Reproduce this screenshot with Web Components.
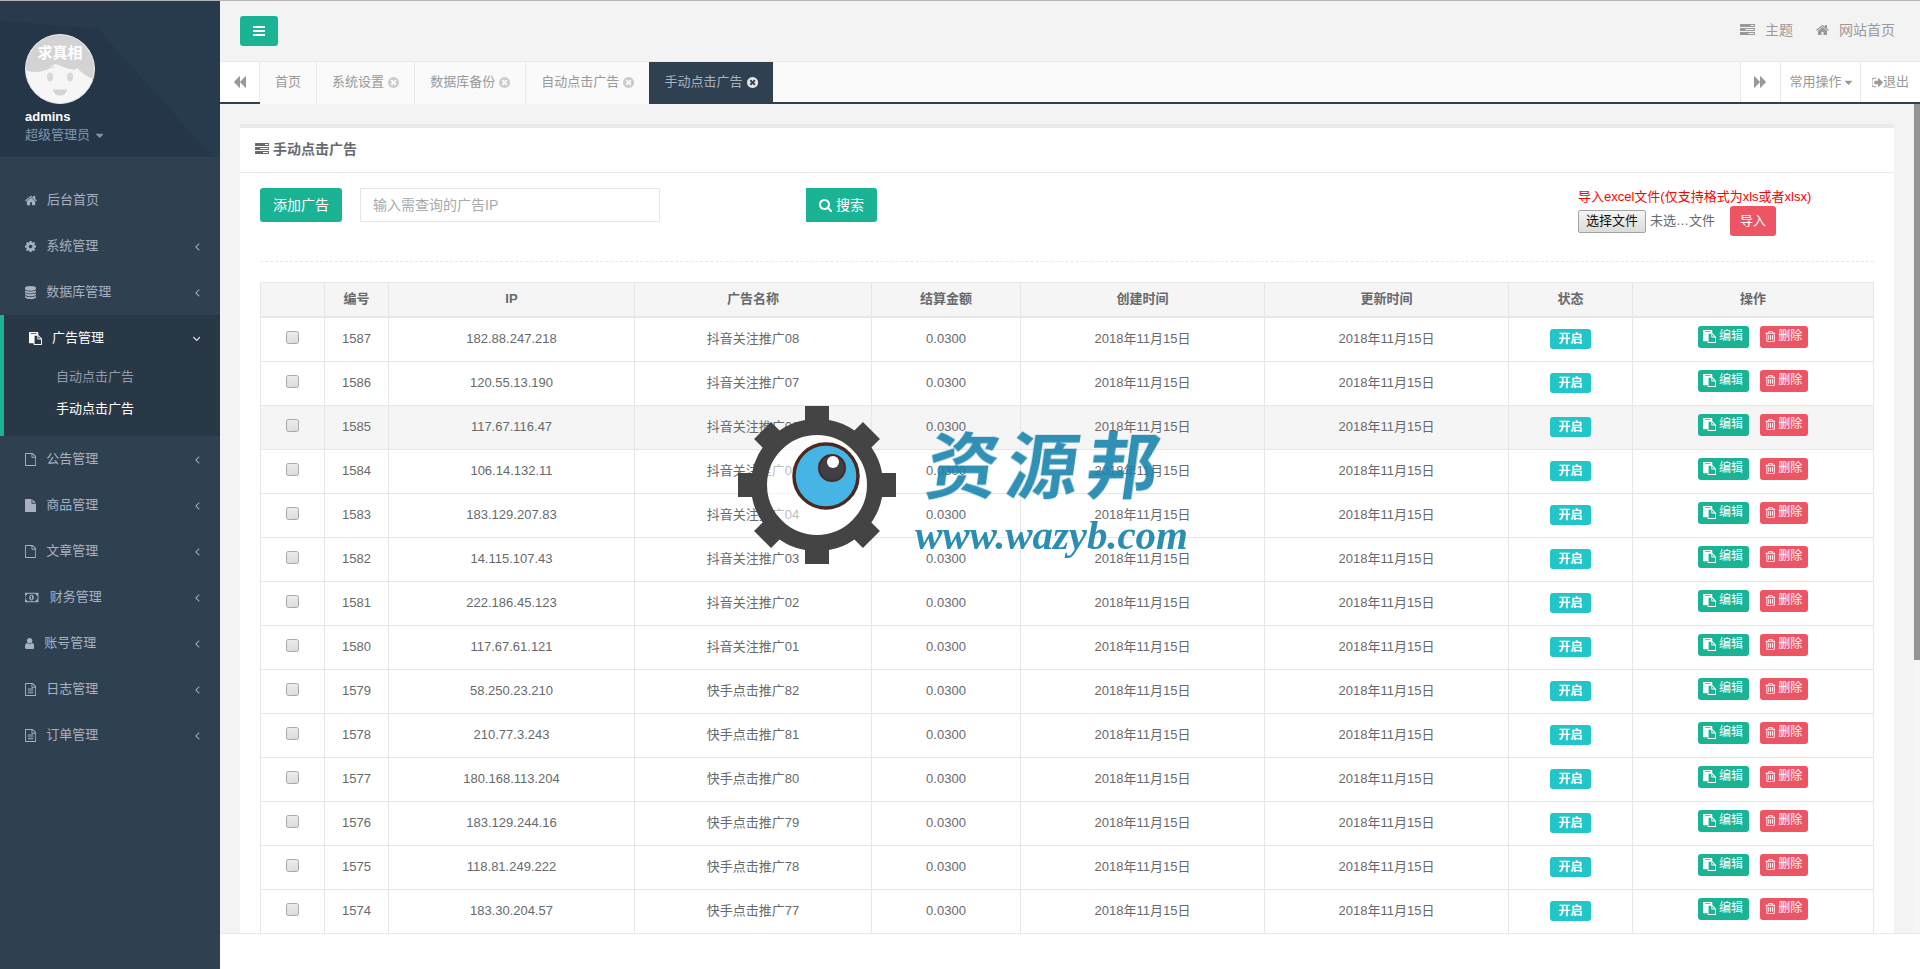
<!DOCTYPE html>
<html lang="zh-CN">
<head>
<meta charset="utf-8">
<title>手动点击广告</title>
<style>
html,body{margin:0;height:100%;overflow:hidden;background:#fff;font:13px/1.43 "Liberation Sans","Noto Sans CJK SC",sans-serif;color:#676a6c}
</style>
</head>
<body>
<x-app>
  <x-sidebar slot="side">
    <x-nav-item icon="home" label="后台首页" plain></x-nav-item>
    <x-nav-item icon="cog" label="系统管理"></x-nav-item>
    <x-nav-item icon="database" label="数据库管理"></x-nav-item>
    <x-nav-item icon="paste" label="广告管理" active>
      <x-sub-item label="自动点击广告"></x-sub-item>
      <x-sub-item label="手动点击广告" current></x-sub-item>
    </x-nav-item>
    <x-nav-item icon="file-o" label="公告管理"></x-nav-item>
    <x-nav-item icon="file" label="商品管理"></x-nav-item>
    <x-nav-item icon="file-o" label="文章管理"></x-nav-item>
    <x-nav-item icon="money" label="财务管理"></x-nav-item>
    <x-nav-item icon="user" label="账号管理"></x-nav-item>
    <x-nav-item icon="file-text-o" label="日志管理"></x-nav-item>
    <x-nav-item icon="file-text-o" label="订单管理"></x-nav-item>
  </x-sidebar>
  <x-topbar slot="top"></x-topbar>
  <x-tabbar slot="tabs">
    <x-tab label="首页" plain></x-tab>
    <x-tab label="系统设置"></x-tab>
    <x-tab label="数据库备份"></x-tab>
    <x-tab label="自动点击广告"></x-tab>
    <x-tab label="手动点击广告" active></x-tab>
  </x-tabbar>
  <x-panel slot="main" title="手动点击广告">
    <x-toolbar></x-toolbar>
    <x-ad-table></x-ad-table>
  </x-panel>
  <x-watermark slot="over"></x-watermark>
</x-app>

<script>
const ICONS = {
  bars:[128,1536,"M1664 1344v128q0 26-19 45t-45 19h-1408q-26 0-45-19t-19-45v-128q0-26 19-45t45-19h1408q26 0 45 19t19 45zm0-512v128q0 26-19 45t-45 19h-1408q-26 0-45-19t-19-45v-128q0-26 19-45t45-19h1408q26 0 45 19t19 45zm0-512v128q0 26-19 45t-45 19h-1408q-26 0-45-19t-19-45v-128q0-26 19-45t45-19h1408q26 0 45 19t19 45z"],
  search:[64,1664,"M1216 832q0-185-131.500-316.500t-316.500-131.500-316.500 131.500-131.500 316.500 131.500 316.500 316.500 131.500 316.500-131.500 131.500-316.500zm512 832q0 52-38 90t-90 38q-54 0-90-38l-343-342q-179 124-399 124-143 0-273.500-55.500t-225-150-150-225-55.500-273.500 55.500-273.500 150-225 225-150 273.500-55.500 273.500 55.500 225 150 150 225 55.500 273.500q0 220-124 399l343 343q37 37 37 90z"],
  home:[64,1664,"M1472 992v480q0 26-19 45t-45 19h-384v-384h-256v384h-384q-26 0-45-19t-19-45v-480q0-1 .5-3t.5-3l575-474 575 474q1 2 1 6zm223-69l-62 74q-8 9-21 11h-3q-13 0-21-7l-692-577-692 577q-12 8-24 7-13-2-21-11l-62-74q-8-10-7-23.500t11-21.500l719-599q32-26 76-26t76 26l244 204v-195q0-14 9-23t23-9h192q14 0 23 9t9 23v408l219 182q10 8 11 21.500t-7 23.500z"],
  user:[256,1280,"M1536 1399q0 109-62.500 187t-150.500 78h-854q-88 0-150.500-78t-62.500-187q0-85 8.500-160.500t31.500-152 58.500-131 94-89 134.500-34.500q131 128 313 128t313-128q76 0 134.500 34.500t94 89 58.500 131 31.500 152 8.500 160.500zm-256-887q0 159-112.500 271.500t-271.500 112.500-271.500-112.500-112.500-271.500 112.500-271.500 271.500-112.500 271.500 112.500 112.500 271.500z"],
  database:[128,1536,"M896 768q237 0 443-43t325-127v170q0 69-103 128t-280 93.500-385 34.500-385-34.500-280-93.500-103-128v-170q119 84 325 127t443 43zm0 768q237 0 443-43t325-127v170q0 69-103 128t-280 93.500-385 34.500-385-34.500-280-93.500-103-128v-170q119 84 325 127t443 43zm0-384q237 0 443-43t325-127v170q0 69-103 128t-280 93.500-385 34.500-385-34.500-280-93.500-103-128v-170q119 84 325 127t443 43zm0-1152q208 0 385 34.500t280 93.500 103 128v128q0 69-103 128t-280 93.500-385 34.500-385-34.500-280-93.500-103-128v-128q0-69 103-128t280-93.500 385-34.500z"],
  cog:[128,1536,"M1152 896q0-106-75-181t-181-75-181 75-75 181 75 181 181 75 181-75 75-181zm512-109v222q0 12-8 23t-20 13l-185 28q-19 54-39 91 35 50 107 138 10 12 10 25t-9 23q-27 37-99 108t-94 71q-12 0-26-9l-138-108q-44 23-91 38-16 136-29 186-7 28-36 28h-222q-14 0-24.500-8.500t-11.500-21.500l-28-184q-49-16-90-37l-141 107q-10 9-25 9-14 0-25-11-126-114-165-168-7-10-7-23 0-12 8-23 15-21 51-66.500t54-70.500q-27-50-41-99l-183-27q-13-2-21-12.500t-8-23.500v-222q0-12 8-23t19-13l186-28q14-46 39-92-40-57-107-138-10-12-10-24 0-10 9-23 26-36 98.500-107.500t94.500-71.500q13 0 26 10l138 107q44-23 91-38 16-136 29-186 7-28 36-28h222q14 0 24.500 8.500t11.500 21.500l28 184q49 16 90 37l142-107q9-9 24-9 13 0 25 10 129 119 165 170 7 8 7 22 0 12-8 23-15 21-51 66.500t-54 70.500q26 50 41 98l183 28q13 2 21 12.500t8 23.500z"],
  "angle-left":[576,640,"M1203 544q0 13-10 23l-393 393 393 393q10 10 10 23t-10 23l-50 50q-10 10-23 10t-23-10l-466-466q-10-10-10-23t10-23l466-466q10-10 23-10t23 10l50 50q10 10 10 23z"],
  "angle-down":[384,1024,"M1395 736q0 13-10 23l-466 466q-10 10-23 10t-23-10l-466-466q-10-10-10-23t10-23l50-50q10-10 23-10t23 10l393 393 393-393q10-10 23-10t23 10l50 50q10 10 10 23z"],
  "caret-down":[384,1024,"M1408 704q0 26-19 45l-448 448q-19 19-45 19t-45-19l-448-448q-19-19-19-45t19-45 45-19h896q26 0 45 19t19 45z"],
  "file-o":[128,1536,"M1596 380q28 28 48 76t20 88v1152q0 40-28 68t-68 28h-1344q-40 0-68-28t-28-68v-1600q0-40 28-68t68-28h896q40 0 88 20t76 48zm-444-244v376h376q-10-29-22-41l-313-313q-12-12-41-22zm384 1528v-1024h-416q-40 0-68-28t-28-68v-416h-768v1536h1280z"],
  file:[128,1536,"M1152 512v-472q22 14 36 28l408 408q14 14 28 36h-472zm-128 32q0 40 28 68t68 28h544v1056q0 40-28 68t-68 28h-1344q-40 0-68-28t-28-68v-1600q0-40 28-68t68-28h800v544z"],
  "file-text-o":[128,1536,"M1596 380q28 28 48 76t20 88v1152q0 40-28 68t-68 28h-1344q-40 0-68-28t-28-68v-1600q0-40 28-68t68-28h896q40 0 88 20t76 48zm-444-244v376h376q-10-29-22-41l-313-313q-12-12-41-22zm384 1528v-1024h-416q-40 0-68-28t-28-68v-416h-768v1536h1280zm-1024-864q0-14 9-23t23-9h704q14 0 23 9t9 23v64q0 14-9 23t-23 9h-704q-14 0-23-9t-9-23v-64zm736 224q14 0 23 9t9 23v64q0 14-9 23t-23 9h-704q-14 0-23-9t-9-23v-64q0-14 9-23t23-9h704zm0 256q14 0 23 9t9 23v64q0 14-9 23t-23 9h-704q-14 0-23-9t-9-23v-64q0-14 9-23t23-9h704z"],
  paste:[0,1792,"M768 1664h896v-640h-416q-40 0-68-28t-28-68v-416h-384v1152zm256-1440v-64q0-13-9.500-22.500t-22.500-9.500h-704q-13 0-22.500 9.500t-9.500 22.500v64q0 13 9.500 22.500t22.500 9.500h704q13 0 22.500-9.500t9.500-22.500zm256 672h299l-299-299v299zm512 128v672q0 40-28 68t-68 28h-960q-40 0-68-28t-28-68v-160h-544q-40 0-68-28t-28-68v-1344q0-40 28-68t68-28h1088q40 0 68 28t28 68v328q21 13 36 28l408 408q28 28 48 76t20 88z"],
  "trash-o":[128,1408,"M704 736v576q0 14-9 23t-23 9h-64q-14 0-23-9t-9-23v-576q0-14 9-23t23-9h64q14 0 23 9t9 23zm256 0v576q0 14-9 23t-23 9h-64q-14 0-23-9t-9-23v-576q0-14 9-23t23-9h64q14 0 23 9t9 23zm256 0v576q0 14-9 23t-23 9h-64q-14 0-23-9t-9-23v-576q0-14 9-23t23-9h64q14 0 23 9t9 23zm128 724v-948h-896v948q0 22 7 40.500t14.500 27 10.500 8.500h832q3 0 10.500-8.500t14.500-27 7-40.500zm-672-1076h448l-48-117q-7-9-17-11h-317q-10 2-17 11zm928 32v64q0 14-9 23t-23 9h-96v948q0 83-47 143.500t-113 60.500h-832q-66 0-113-58.500t-47-141.500v-952h-96q-14 0-23-9t-9-23v-64q0-14 9-23t23-9h309l70-167q15-37 54-63t79-26h320q40 0 79 26t54 63l70 167h309q14 0 23 9t9 23z"],
  tasks:[0,1792,"M1024 1408h640v-128h-640v128zm-384-512h1024v-128h-1024v128zm640-512h384v-128h-384v128zm512 832v256q0 26-19 45t-45 19h-1664q-26 0-45-19t-19-45v-256q0-26 19-45t45-19h1664q26 0 45 19t19 45zm0-512v256q0 26-19 45t-45 19h-1664q-26 0-45-19t-19-45v-256q0-26 19-45t45-19h1664q26 0 45 19t19 45zm0-512v256q0 26-19 45t-45 19h-1664q-26 0-45-19t-19-45v-256q0-26 19-45t45-19h1664q26 0 45 19t19 45z"],
  backward:[64,1664,"M1683 141q19-19 32-13t13 32v1472q0 26-13 32t-32-13l-710-710q-9-9-13-19v710q0 26-13 32t-32-13l-710-710q-19-19-19-45t19-45l710-710q19-19 32-13t13 32v710q4-10 13-19z"],
  forward:[64,1664,"M109 1651q-19 19-32 13t-13-32v-1472q0-26 13-32t32 13l710 710q9 9 13 19v-710q0-26 13-32t32 13l710 710q19 19 19 45t-19 45l-710 710q-19 19-32 13t-13-32v-710q-4 10-13 19z"],
  "times-circle":[128,1536,"M1277 1122q0-26-19-45l-181-181 181-181q19-19 19-45 0-27-19-46l-90-90q-19-19-46-19-26 0-45 19l-181 181-181-181q-19-19-45-19-27 0-46 19l-90 90q-19 19-19 46 0 26 19 45l181 181-181 181q-19 19-19 45 0 27 19 46l90 90q19 19 46 19 26 0 45-19l181-181 181 181q19 19 45 19 27 0 46-19l90-90q19-19 19-46zm387-226q0 209-103 385.500t-279.500 279.500-385.500 103-385.500-103-279.500-279.500-103-385.500 103-385.500 279.500-279.500 385.500-103 385.500 103 279.500 279.500 103 385.500z"],
  "sign-out":[128,1536,"M704 1440q0 4 1 20t.5 26.500-3 23.500-10 19.500-20.500 6.500h-320q-119 0-203.500-84.500t-84.500-203.500v-704q0-119 84.500-203.500t203.500-84.500h320q13 0 22.500 9.500t9.500 22.500q0 4 1 20t.5 26.500-3 23.500-10 19.500-20.500 6.500h-320q-66 0-113 47t-47 113v704q0 66 47 113t113 47h312l11.500 1 11.500 3 8 5.500 7 9 2 13.500zm928-544q0 26-19 45l-544 544q-19 19-45 19t-45-19-19-45v-288h-448q-26 0-45-19t-19-45v-384q0-26 19-45t45-19h448v-288q0-26 19-45t45-19 45 19l544 544q19 19 19 45z"],
  money:[0,2048,"M704 1152h384v-96h-128v-448h-114l-148 137 77 80q42-37 55-57h2v288h-128v96zm512-256q0 70-21 142t-59.500 134-101.500 101-138 39-138-39-101.500-101-59.500-134-21-142 21-142 59.500-134 101.500-101 138-39 138 39 101.500 101 59.500 134 21 142zm512 256v-512q-106 0-181-75t-75-181h-1152q0 106-75 181t-181 75v512q106 0 181 75t75 181h1152q0-106 75-181t181-75zm128-832v1152q0 26-19 45t-45 19h-1792q-26 0-45-19t-19-45v-1152q0-26 19-45t45-19h1792q26 0 45 19t19 45z"]
};

function base(cls, html){
  return class extends HTMLElement{
    constructor(){super();this.attachShadow({mode:"open"}).innerHTML=html;}
  };
}

class XIcon extends HTMLElement{
  connectedCallback(){
    const [x,w,d]=ICONS[this.getAttribute("name")];
    const s=this.shadowRoot||this.attachShadow({mode:"open"});
    s.innerHTML=`<style>:host{display:inline-block;line-height:1;height:1em;width:${w/1792}em;flex:none}
      svg{display:block;width:100%;height:100%;fill:currentColor}</style>
      <svg viewBox="${x} 0 ${w} 1792" preserveAspectRatio="none"><path d="${d}"/></svg>`;
  }
}
customElements.define("x-icon",XIcon);

customElements.define("x-app",base("app",`<style>
:host{display:grid;grid-template-columns:220px 1fr;grid-template-rows:61px 42px 1fr 36px;height:969px;box-sizing:border-box;border-top:1px solid #b4b4b4;position:relative;overflow:hidden}
.side{grid-row:1/5;display:block;min-height:0}
.foot{grid-column:2;grid-row:4;background:#fff;border-top:1px solid #e7eaec}
.main{display:block;min-height:0;min-width:0}
</style>
<slot name="side" class="side"></slot>
<slot name="top"></slot>
<slot name="tabs"></slot>
<slot name="main"></slot>
<div class="foot"></div>
<slot name="over"></slot>`));

customElements.define("x-sidebar",base("side",`<style>
:host{display:block;height:100%;background:#2f4050;grid-row:1/5;color:#a7b1c2;font-size:13px}
.head{position:relative;height:156px;background:#243648;overflow:hidden;box-sizing:border-box;padding:33px 0 0 25px}
.bg{position:absolute;left:0;top:0}
.av,.name,.role{position:relative}
.av{display:block;width:70px;height:70px}
.name{color:#fff;font-weight:700;font-size:13px;line-height:18px;margin-top:4px}
.role{color:#8095a8;font-size:13px;line-height:18px;display:flex;align-items:center;gap:6px}
.role x-icon{font-size:13px}
nav{display:block;padding-top:20px}
</style>
<div class="head">
<svg class="bg" width="220" height="156" viewBox="0 0 220 156">
<polygon points="0,0 220,0 220,156 0,156" fill="#243648"/>
<polygon points="0,0 120,0 98,28 0,20" fill="#283a4c"/>
<polygon points="120,0 220,0 220,156 213,156 98,28" fill="#283b4c"/>
</svg>
<svg class="av" viewBox="0 0 70 70">
<defs><clipPath id="c"><circle cx="35" cy="35" r="34"/></clipPath></defs>
<circle cx="35" cy="35" r="34.5" fill="#f6f6f6" stroke="#e8e8e8"/>
<g clip-path="url(#c)">
<path d="M0 0H70V46C61 42 55 38 53 34C47 38 40 33 30 30C25 33 18 41 3 37L0 36Z" fill="#d3d3d3"/>
<ellipse cx="25" cy="43" rx="3" ry="4.5" fill="#d8d8d8"/><ellipse cx="45" cy="43" rx="3" ry="4.5" fill="#d8d8d8"/>
<path d="M28 55.500h14q-1 6-7 6t-7-6z" fill="#d3d3d3"/>
<path d="M21 36q4-3 9-3" fill="none" stroke="#d8d8d8"/>
<text x="35" y="24" text-anchor="middle" font-size="15" font-weight="700" fill="#fff" font-family="'Noto Sans CJK SC',sans-serif">求真相</text>
</g></svg>
<div class="name">admins</div>
<div class="role">超级管理员 <x-icon name="caret-down"></x-icon></div>
</div>
<nav><slot></slot></nav>`));

class XNavItem extends HTMLElement{
  connectedCallback(){
    if(this.shadowRoot) return;
    const active=this.hasAttribute("active"), plain=this.hasAttribute("plain");
    const arrow=plain?"":`<x-icon class="ar" name="${active?"angle-down":"angle-left"}"></x-icon>`;
    this.attachShadow({mode:"open"}).innerHTML=`<style>
:host{display:block;color:#a7b1c2;font-size:13px}
:host([active]){background:#293846;border-left:4px solid #1ab394;color:#fff}
.row{display:flex;align-items:center;height:46px;box-sizing:border-box;padding-left:25px;gap:10px;position:relative}
.ar{margin-left:auto;margin-right:20px;font-size:13px}
.sub{display:block;padding-bottom:11px}
</style>
<div class="row"><x-icon name="${this.getAttribute("icon")}"></x-icon><span>${this.getAttribute("label")}</span>${arrow}</div>
${active?'<div class="sub"><slot></slot></div>':''}`;
  }
}
customElements.define("x-nav-item",XNavItem);

class XSubItem extends HTMLElement{
  connectedCallback(){
    if(this.shadowRoot) return;
    this.attachShadow({mode:"open"}).innerHTML=`<style>
:host{display:block;height:32px;line-height:32px;padding-left:52px;color:#8f9bac;font-size:13px}
:host([current]){color:#fff}</style>${this.getAttribute("label")}`;
  }
}
customElements.define("x-sub-item",XSubItem);

customElements.define("x-topbar",base("top",`<style>
:host{display:flex;align-items:center;background:#f3f3f4;border-bottom:1px solid #e7eaec;box-sizing:border-box;height:61px;padding:0 25px 0 20px;color:#999;font-size:14px}
.btn{width:38px;height:30px;background:#1ab394;border-radius:3px;color:#fff;display:flex;align-items:center;justify-content:center;font-size:14px;margin-top:-1px}
.r{margin-left:auto;display:flex;align-items:center;margin-top:-1px}
.r span{display:flex;align-items:center}
.t{gap:10px;margin-right:23px}.h{gap:10px}
.t x-icon{font-size:14px;width:15px}
</style>
<div class="btn"><x-icon name="bars"></x-icon></div>
<div class="r"><span class="t"><x-icon name="tasks"></x-icon>主题</span><span class="h"><x-icon name="home"></x-icon>网站首页</span></div>`));

customElements.define("x-tabbar",base("tabs",`<style>
:host{display:flex;height:42px;box-sizing:border-box;background:#fafafa;border-bottom:2px solid #2f4050;color:#999;font-size:13px}
.btn{display:flex;align-items:center;justify-content:center;background:#fff;box-sizing:border-box;border-right:1px solid #e7eaec}
.l{width:40px}
.tabs{display:flex;flex:1}
.rb{margin-left:auto;display:flex}
.rb .btn{border-right:0;border-left:1px solid #e7eaec}
.f{width:40px}.o{width:80px;gap:3px}.q{width:60px}
x-icon{font-size:13px}
.f x-icon,.l x-icon{font-size:14px}
.c{width:7px;font-size:13px}
</style>
<div class="btn l"><x-icon name="backward"></x-icon></div>
<div class="tabs"><slot></slot></div>
<div class="rb">
<div class="btn f"><x-icon name="forward"></x-icon></div>
<div class="btn o">常用操作<x-icon name="caret-down" class="c"></x-icon></div>
<div class="btn q"><x-icon name="sign-out"></x-icon>退出</div>
</div>`));

class XTab extends HTMLElement{
  connectedCallback(){
    if(this.shadowRoot) return;
    const close=this.hasAttribute("plain")?"":'<x-icon name="times-circle"></x-icon>';
    this.attachShadow({mode:"open"}).innerHTML=`<style>
:host{display:flex;align-items:center;gap:4px;box-sizing:border-box;padding:0 15px;border-right:1px solid #e7eaec;height:42px;color:#999;font-size:13px;background:#fafafa;flex:none}
x-icon{font-size:13px;color:#ccc;margin-top:-2px}
:host([active]){background:#2f4050;color:#a7b1c2;border-right:0;margin-left:-1px}
:host([active]) x-icon{color:#e4e6e9}
span{margin-top:-2px}
</style><span>${this.getAttribute("label")}</span>${close}`;
  }
}
customElements.define("x-tab",XTab);

class XPanel extends HTMLElement{
  connectedCallback(){
    if(this.shadowRoot) return;
    this.attachShadow({mode:"open"}).innerHTML=`<style>
:host{display:block;height:100%;overflow:hidden;background:#f3f3f4;box-sizing:border-box;padding:20px 26px 0 20px;position:relative}
.track{position:absolute;right:0;top:0;bottom:0;width:6px;background:#f5f5f5}
.thumb{height:556px;background:#959595}
.card{background:#fff;border-top:4px solid #e7eaec;min-height:100%}
.title{display:flex;align-items:center;gap:4px;height:45px;box-sizing:border-box;padding:0 15px 2px;border-bottom:1px solid #e7eaec;font-size:14px;font-weight:700}
.title x-icon{font-size:14px}
.body{padding:15px 20px 0}
</style>
<div class="card"><div class="title"><x-icon name="tasks"></x-icon>${this.getAttribute("title")}</div>
<div class="body"><slot></slot></div></div>
<div class="track"><div class="thumb"></div></div>`;
  }
}
customElements.define("x-panel",XPanel);

customElements.define("x-toolbar",base("tb",`<style>
:host{display:block}
.bar{display:flex;align-items:flex-start;height:48px}
.btn{height:34px;box-sizing:border-box;background:#1ab394;color:#fff;font-size:14px;display:flex;align-items:center;justify-content:center;border-radius:3px}
.add{width:82px}
.in{width:300px;height:34px;box-sizing:border-box;border:1px solid #e5e6e7;border-radius:1px;margin-left:18px;padding:0 12px;font:14px "Liberation Sans","Noto Sans CJK SC",sans-serif;color:#676a6c;background:#fff;outline:0}
.in::placeholder{color:#a9a9a9;opacity:1}
.s{width:71px;margin-left:146px;gap:4px;border-radius:0 3px 3px 0}
.s x-icon{font-size:14px}
.imp{margin-left:auto;margin-right:62px;width:234px}
.t{color:#f00;font-size:13px;line-height:18px;white-space:nowrap}
.row{display:flex;align-items:center;height:30px}
.file{height:23px;width:68px;box-sizing:border-box;border:1px solid #a3a3a3;border-radius:2px;background:linear-gradient(#f4f4f4,#dcdcdc);color:#111;font-size:13px;display:flex;align-items:center;justify-content:center;margin-top:1px}
.nf{margin-left:4px;width:80px;white-space:nowrap;margin-top:1px}
.go{width:46px;height:30px;background:#ed5565;color:#fff;border-radius:3px;font-size:13px;display:flex;align-items:center;justify-content:center}
hr{border:0;border-top:1px dashed #e7eaec;margin:25px 0 20px}
</style>
<div class="bar">
<div class="btn add">添加广告</div>
<input class="in" placeholder="输入需查询的广告IP">
<div class="btn s"><x-icon name="search"></x-icon>搜索</div>
<div class="imp"><div class="t">导入excel文件(仅支持格式为xls或者xlsx)</div>
<div class="row"><div class="file">选择文件</div><div class="nf">未选…文件</div><div class="go">导入</div></div></div>
</div><hr>`));

const ROWS=[
[1587,"182.88.247.218","抖音关注推广08"],[1586,"120.55.13.190","抖音关注推广07"],[1585,"117.67.116.47","抖音关注推广06"],
[1584,"106.14.132.11","抖音关注推广05"],[1583,"183.129.207.83","抖音关注推广04"],[1582,"14.115.107.43","抖音关注推广03"],
[1581,"222.186.45.123","抖音关注推广02"],[1580,"117.67.61.121","抖音关注推广01"],[1579,"58.250.23.210","快手点击推广82"],
[1578,"210.77.3.243","快手点击推广81"],[1577,"180.168.113.204","快手点击推广80"],[1576,"183.129.244.16","快手点击推广79"],
[1575,"118.81.249.222","快手点击推广78"],[1574,"183.30.204.57","快手点击推广77"]];

class XAdTable extends HTMLElement{
  connectedCallback(){
    if(this.shadowRoot) return;
    const rows=ROWS.map((r,i)=>`<tr class="${i==2?"hl":""}"><td><input type="checkbox"></td><td>${r[0]}</td><td>${r[1]}</td><td>${r[2]}</td><td>0.0300</td><td>2018年11月15日</td><td>2018年11月15日</td><td><span class="lb">开启</span></td>
<td><div class="ops"><span class="b e"><x-icon name="paste"></x-icon>编辑</span><span class="b d"><x-icon name="trash-o"></x-icon>删除</span></div></td></tr>`).join("");
    this.attachShadow({mode:"open"}).innerHTML=`<style>
:host{display:block;width:1613px;font-size:13px;color:#676a6c}
table{border-collapse:collapse;table-layout:fixed;width:1613px}
th,td{border:1px solid #e7e7e7;text-align:center;padding:0;vertical-align:middle;font-weight:400}
th{background:#f5f5f6;height:33px;font-weight:700;border-bottom:2px solid #e7e7e7}
td{height:43px}
tr.hl td{background:#f5f5f5}
input{appearance:none;-webkit-appearance:none;display:block;margin:1px auto 0;width:13px;height:13px;box-sizing:border-box;border:1px solid #a9a9a9;border-radius:2.5px;background:linear-gradient(#ececec,#dcdcdc);transform:translateY(-3px)}
.lb{display:inline-block;background:#23c6c8;color:#fff;font-size:12px;font-weight:700;line-height:14px;padding:3px 8px;border-radius:3px;vertical-align:middle;margin-top:-1px}
.ops{display:flex;justify-content:center;gap:11px;margin-bottom:6px}
.b{display:flex;align-items:center;gap:3px;height:22px;box-sizing:border-box;padding:0 5px;color:#fff;font-size:12px;border-radius:3px}
.b x-icon{font-size:13px}
.e{background:#1ab394;width:51px}.d{background:#ed5565;width:48px}
</style>
<table><colgroup><col style="width:64px"><col style="width:64px"><col style="width:246px"><col style="width:237px"><col style="width:149px"><col style="width:244px"><col style="width:244px"><col style="width:124px"><col style="width:241px"></colgroup>
<thead><tr><th></th><th>编号</th><th>IP</th><th>广告名称</th><th>结算金额</th><th>创建时间</th><th>更新时间</th><th>状态</th><th>操作</th></tr></thead>
<tbody>${rows}</tbody></table>`;
  }
}
customElements.define("x-ad-table",XAdTable);

customElements.define("x-watermark",base("wm",`<style>
:host{position:absolute;left:735px;top:400px;width:470px;height:170px;pointer-events:none}
svg{position:absolute;left:0;top:0}
.zh{position:absolute;left:193px;top:17px;font:700 72px/86px "Noto Sans CJK SC",sans-serif;color:#1b84ad;letter-spacing:8px;transform:skewX(-8deg);white-space:nowrap;opacity:.9;filter:blur(.6px)}
.en{position:absolute;left:180px;top:109px;font:italic 700 41px/50px "Liberation Serif",serif;color:#1b84ad;letter-spacing:-.1px;white-space:nowrap;opacity:.92;filter:blur(.5px)}
</style>
<svg width="170" height="170" viewBox="0 0 170 170">
<g transform="translate(82 84)">
<g fill="#444">
<rect x="-12" y="-79" width="24" height="22"/><rect x="-12" y="57" width="24" height="22"/><rect x="-79" y="-12" width="22" height="24"/><rect x="57" y="-12" width="22" height="24"/>
<g transform="rotate(45)"><rect x="-12" y="-77" width="24" height="22"/><rect x="-12" y="55" width="24" height="22"/><rect x="-77" y="-12" width="22" height="24"/><rect x="55" y="-12" width="22" height="24"/></g>
</g>
<circle r="50" fill="#fff" fill-opacity=".55"/>
<circle r="58" fill="none" stroke="#444" stroke-width="16"/>
<circle cx="9" cy="-9" r="32" fill="#46b4e4" stroke="#4a2a20" stroke-width="3.500"/>
<circle cx="15" cy="-17" r="13" fill="#3f3f45" stroke="#4a2a20" stroke-width="2"/>
<circle cx="16" cy="-23" r="6" fill="#fff"/>
</g></svg>
<div class="zh">资源邦</div>
<div class="en">www.wazyb.com</div>`));
</script>
</body>
</html>
